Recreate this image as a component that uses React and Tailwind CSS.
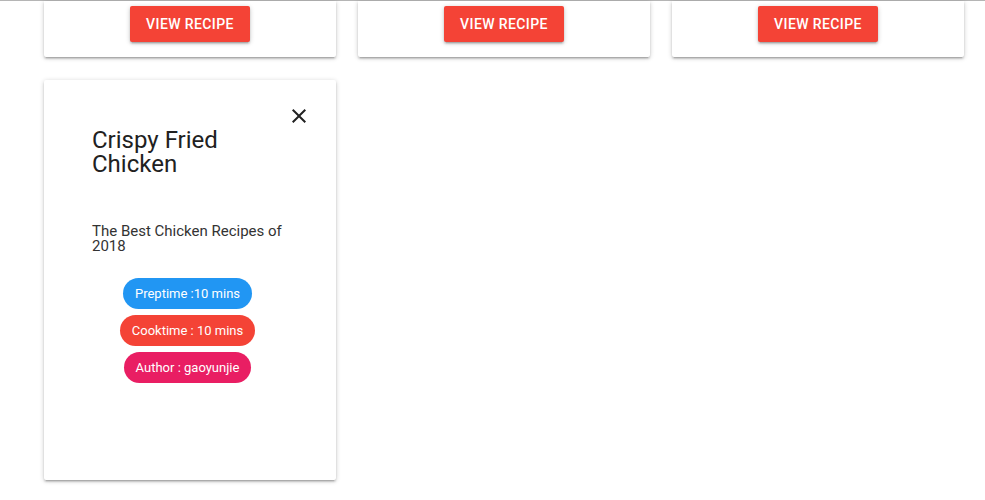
import React from 'react';

const cardShadow =
    'shadow-[0_2px_2px_0_rgba(0,0,0,0.14),0_3px_1px_-2px_rgba(0,0,0,0.12),0_1px_5px_0_rgba(0,0,0,0.2)]';

function TopCard() {
    return (
        <div className={`bg-white rounded-b-[2px] ${cardShadow} flex justify-center pt-[5px] pb-[15px]`}>
            <button className="h-9 w-[120px] bg-[#f44336] text-white text-sm font-medium uppercase tracking-[0.4px] rounded-[2px] shadow-[0_2px_2px_0_rgba(0,0,0,0.14),0_3px_1px_-2px_rgba(0,0,0,0.12),0_1px_5px_0_rgba(0,0,0,0.2)]">
                View Recipe
            </button>
        </div>
    );
}

function Chip({ color, children }) {
    return (
        <span className={`h-[31px] px-3 rounded-full text-white text-[13px] flex items-center ${color}`}>
            {children}
        </span>
    );
}

function DetailCard() {
    return (
        <div className={`relative bg-white rounded-[2px] ${cardShadow} h-[400px] pt-12 pl-12 pr-[53px]`}>
            {/* close button */}
            <button className="absolute top-6 right-[25px] w-6 h-6 text-[#212121]">
                <svg viewBox="0 0 24 24" className="w-6 h-6" fill="currentColor">
                    <path d="M19 6.41 17.59 5 12 10.59 6.41 5 5 6.41 10.59 12 5 17.59 6.41 19 12 13.41 17.59 19 19 17.59 13.41 12z" />
                </svg>
            </button>

            <h2 className="text-2xl leading-6 text-[#212121]">Crispy Fried Chicken</h2>
            <p className="mt-12 text-[15px] leading-[15px] text-[#333]">The Best Chicken Recipes of 2018</p>

            <div className="mt-6 flex flex-col items-center gap-1.5">
                <Chip color="bg-[#2196f3]">Preptime :10 mins</Chip>
                <Chip color="bg-[#f44336]">Cooktime : 10 mins</Chip>
                <Chip color="bg-[#e91e63]">Author : gaoyunjie</Chip>
            </div>
        </div>
    );
}

export default function App() {
    return (
        <div className="min-h-[500px] bg-white border-t border-[#b5b5b5] font-['Roboto',sans-serif]">
            <div className="grid grid-cols-[292px_292px_292px] gap-x-[22px] gap-y-[23px] pl-[44px]">
                <TopCard />
                <TopCard />
                <TopCard />
                <DetailCard />
            </div>
        </div>
    );
}
